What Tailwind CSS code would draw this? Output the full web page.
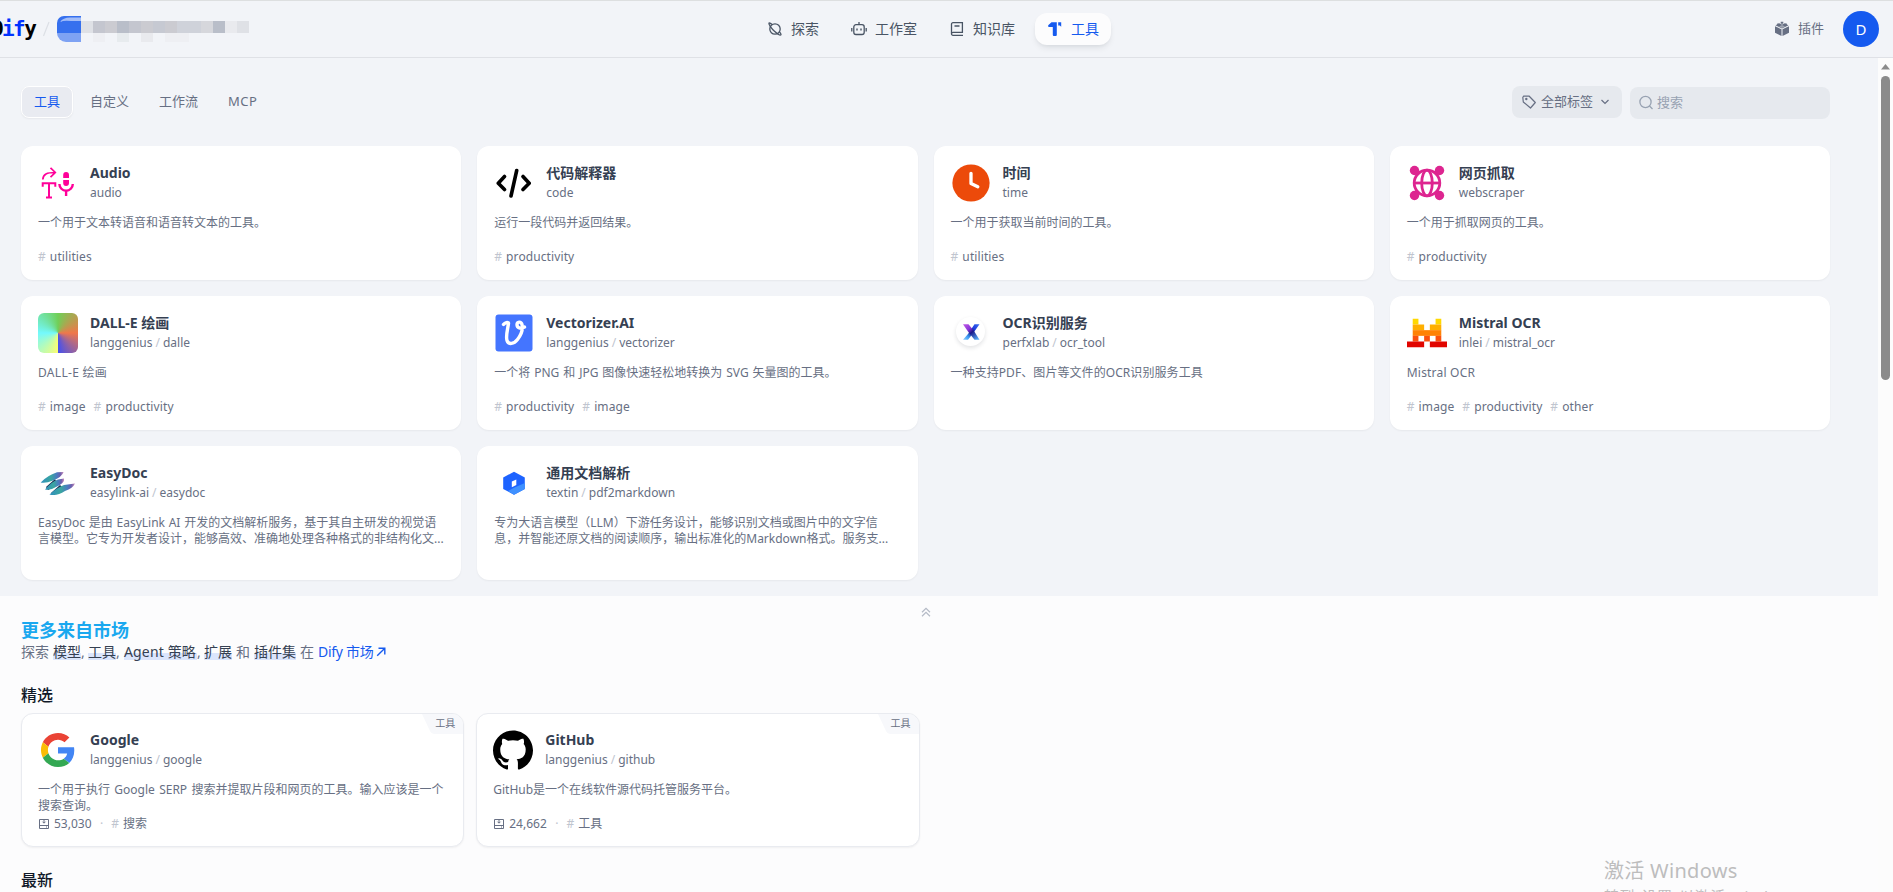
<!DOCTYPE html>
<html lang="zh-CN">
<head>
<meta charset="utf-8">
<title>工具 - Dify</title>
<script src="https://cdn.jsdelivr.net/npm/@tailwindcss/browser@4"></script>
</head>
<body class="w-[1893px] h-[892px] overflow-hidden bg-[#f2f4f8] font-['Noto_Sans','Noto_Sans_CJK_SC',sans-serif] text-[#676f83]">
<div class="flex h-[892px] flex-col relative">

<!-- header -->
<header class="flex h-[58px] shrink-0 items-center border-t border-b border-t-[#dddfe0] border-b-[#dfe1e6]">
  <div class="flex w-[755px] shrink-0 items-center">
    <div class="-ml-[9px] w-[48px] whitespace-nowrap font-['DejaVu_Sans_Mono',monospace] text-[21px] leading-none font-bold tracking-[-1.6px] text-black">D<span class="text-[#0033ff]">if</span>y</div>
    <svg class="ml-[3px] h-4 w-2" viewBox="0 0 8 16" fill="none" stroke="#dcdfe5" stroke-width="1.2"><path d="M7 1 1.5 15"/></svg>
    <svg class="ml-[7px] h-[28px] w-[194px]" viewBox="0 0 194 28" shape-rendering="crispEdges">
      <g shape-rendering="auto"><path d="M7 1h17v17H0V8A7 7 0 0 1 7 1z" fill="#3670ee"/><path d="M0 18h24v9H9a9 9 0 0 1-9-9z" fill="#7ea2f3"/><path d="M3 7Q6 2.500 13 2.500H24V6H14Q7 5 3 7z" fill="#a3bdf8"/></g>
      <path d="M24 6h12v12H24zM180 6h12v12h-12z" fill="#dfe1e6"/>
      <path d="M36 6h12v12H36zM72 6h12v12H72z" fill="#c4c6cf"/>
      <path d="M48 6h12v12H48zM84 6h12v12H84zM108 6h12v12h-12z" fill="#cbcbd1"/>
      <path d="M60 6h12v12H60zM156 6h12v12h-12z" fill="#b9bec9"/>
      <path d="M96 6h12v12H96z" fill="#c6c9d2"/>
      <path d="M120 6h24v12h-24z" fill="#cfd2da"/>
      <path d="M144 6h12v12h-12z" fill="#d6d7dc"/>
      <path d="M168 6h12v12h-12z" fill="#e9eaee"/>
      <path d="M36 18h12v9H36zM108 18h24v9h-24z" fill="#eeeff3"/>
      <path d="M60 18h12v9H60z" fill="#e7ebee"/>
      <path d="M84 18h12v9H84z" fill="#e9eaee"/>
    </svg>
  </div>
  <nav class="flex shrink-0 gap-2 text-sm text-[#495464]">
    <div class="flex h-8 items-center gap-2 px-3">
      <svg class="size-4" viewBox="0 0 16 16" fill="none" stroke="currentColor" stroke-width="1.300"><circle cx="8" cy="8" r="5.200"/><path d="M5 3.600C3.300 2.100 2.200 1.700 1.900 2.100 1.400 3.200 4.500 7.600 7.500 10.300 10.500 13 13.300 14.400 13.900 13.800 14.200 13.400 13.800 12.400 12.500 10.800"/></svg>
      <span>探索</span>
    </div>
    <div class="flex h-8 items-center gap-2 px-3">
      <svg class="size-4" viewBox="0 0 16 16" fill="none" stroke="currentColor" stroke-width="1.300"><rect x="2.800" y="3.700" width="10.400" height="9.800" rx="2.200"/><path d="M8 4V1M.8 7v3.500M15.200 7v3.500"/><path d="M6 7.500v2M10 7.500v2" stroke-width="1.400"/></svg>
      <span>工作室</span>
    </div>
    <div class="flex h-8 items-center gap-2 px-3">
      <svg class="size-4" viewBox="0 0 16 16" fill="none" stroke="currentColor" stroke-width="1.300"><path d="M14 14.300H4a1.500 1.500 0 0 1-1.500-1.600V3.300A1.500 1.500 0 0 1 4 1.700h9.400v9.600H4a1.500 1.500 0 0 0 0 3M5.500 5h5"/></svg>
      <span>知识库</span>
    </div>
    <div class="flex h-8 items-center gap-2 rounded-xl bg-[#fcfcfd] px-3 text-[#155aef] shadow-md shadow-[#101828]/8">
      <svg class="size-4" viewBox="0 0 16 16" fill="currentColor"><path d="M1.200 5.500V4.200L4.500 1.300H9.800V14q0 1-1 1H6.800q-1 0-1-1V6H1.700zM11.200 1.300h3v4.500L12.800 4.500h-1.600z"/></svg>
      <span>工具</span>
    </div>
  </nav>
  <div class="ml-auto flex items-center pr-[14px]">
    <svg class="size-4" viewBox="0 0 16 16" fill="#676f83"><path d="M1 5.200 7.500 8.300V15L1 11.800zM15 5.200 8.500 8.300V15L15 11.800z"/><path d="M8 3.600 11 2.500l3.500 1.700L8 7.400 1.500 4.200 5 2.500z"/><path d="M3.200 2.500h2.600v2H3.200zM10.200 2.500h2.600v2h-2.600zM6.700.8h2.600v2H6.700z"/><path d="M5 5.500 8 4l3 1.500L8 7z" fill="#f2f4f8" opacity=".4"/></svg>
    <span class="ml-2 text-[13px]">插件</span>
    <div class="ml-[19px] flex size-9 items-center justify-center rounded-full bg-[#155aef] text-[15px] text-white">D</div>
  </div>
</header>

<div class="flex min-h-0 grow">
<main class="flex w-[1878px] shrink-0 flex-col overflow-hidden">
  <!-- tabs and filters -->
  <div class="flex items-start justify-between pt-7 pr-12 pl-[21px]">
    <div class="flex gap-1 text-[13px]">
      <div class="flex h-8 items-center rounded-lg border border-white bg-[#e9ebf1] px-3 text-[#155aef] shadow-xs">工具</div>
      <div class="flex h-8 items-center border border-transparent px-3">自定义</div>
      <div class="flex h-8 items-center border border-transparent px-3">工作流</div>
      <div class="flex h-8 items-center border border-transparent px-3 tracking-[0.5px]">MCP</div>
    </div>
    <div class="flex gap-2 text-[13px]">
      <div class="flex h-8 w-[110px] items-center rounded-lg bg-[#e6e9ee] pl-[9px]">
        <svg class="size-4" viewBox="0 0 16 16" fill="none" stroke="currentColor" stroke-width="1.200" stroke-linejoin="round"><path d="M1.800 3.500 2.500 2.200 8 2l6.300 6.500-4.800 5.500L2.300 8z"/><circle cx="5.300" cy="5" r=".6"/></svg>
        <span class="ml-1">全部标签</span>
        <svg class="ml-[7px] size-[10px]" viewBox="0 0 10 10" fill="none" stroke="currentColor" stroke-width="1.200"><path d="m1.500 3 3.500 3.500L8.500 3"/></svg>
      </div>
      <div class="mt-px flex h-8 w-[200px] items-center rounded-lg bg-[#e6e9ee] pl-2 text-[#98a2b2]">
        <svg class="size-4" viewBox="0 0 16 16" fill="none" stroke="currentColor" stroke-width="1.300"><circle cx="7.500" cy="7" r="5.600"/><path d="m11.500 11 3 3"/></svg>
        <span class="ml-[3px]">搜索</span>
      </div>
    </div>
  </div>

  <!-- installed tools -->
  <section class="mt-[27px] grid shrink-0 grid-cols-4 gap-4 pr-12 pb-4 pl-[21px] text-xs">
    <article class="flex h-[134px] flex-col rounded-xl bg-white p-[17px] shadow-xs">
      <div class="flex h-10 shrink-0 gap-3">
        <svg class="size-10 shrink-0" viewBox="0 0 40 40" fill="none" stroke="#ff0099" stroke-width="2"><path d="M4.800 16.500C5 11 9 9.500 17 9.500M12.500 4.800l4.800 4.700-4.800 4.700" stroke-width="1.700"/><path d="M4.700 23.800V20.300H17.300v3.500M11 20v14.500M8 34.500h6" stroke-width="2"/><path d="M25.200 15V12a2.900 2.900 0 0 1 5.800 0v3zM25.200 17h5.800v3a2.900 2.900 0 0 1-5.800 0z" fill="#ff0099" stroke="none"/><path d="M21.400 21a6.700 6.700 0 0 0 13.400 0M28.100 28v5" stroke-width="2.400"/></svg>
        <div><h3 class="text-sm leading-5 font-bold text-[#354052]">Audio</h3><p class="leading-5">audio</p></div>
      </div>
      <p class="mt-3 h-8 shrink-0 leading-4 whitespace-nowrap">一个用于文本转语音和语音转文本的工具。</p>
      <div class="mt-0.5 flex gap-2 leading-4 tracking-[0.1px]"><span class="flex gap-1"><i class="text-[#c0c5cf] not-italic">#</i>utilities</span></div>
    </article>
    <article class="flex h-[134px] flex-col rounded-xl bg-white p-[17px] shadow-xs">
      <div class="flex h-10 shrink-0 gap-3">
        <svg class="size-10 shrink-0" viewBox="0 0 40 40" fill="none" stroke="#000" stroke-width="3.600" stroke-linecap="round" stroke-linejoin="round"><path d="m10.500 13.500-6.200 6.700 6.200 6.300M29 13.500l6.200 6.700L29 26.500M22.700 7.500 17 33"/></svg>
        <div><h3 class="text-sm leading-5 font-bold text-[#354052]">代码解释器</h3><p class="leading-5">code</p></div>
      </div>
      <p class="mt-3 h-8 shrink-0 leading-4 whitespace-nowrap">运行一段代码并返回结果。</p>
      <div class="mt-0.5 flex gap-2 leading-4 tracking-[0.1px]"><span class="flex gap-1"><i class="text-[#c0c5cf] not-italic">#</i>productivity</span></div>
    </article>
    <article class="flex h-[134px] flex-col rounded-xl bg-white p-[17px] shadow-xs">
      <div class="flex h-10 shrink-0 gap-3">
        <svg class="size-10 shrink-0" viewBox="0 0 40 40"><circle cx="20" cy="20" r="18.600" fill="#ec4a0a"/><path d="M20 10.300V20.500l6.800 3.300" fill="none" stroke="#fff" stroke-width="3.300" stroke-linecap="round" stroke-linejoin="round"/></svg>
        <div><h3 class="text-sm leading-5 font-bold text-[#354052]">时间</h3><p class="leading-5">time</p></div>
      </div>
      <p class="mt-3 h-8 shrink-0 leading-4 whitespace-nowrap">一个用于获取当前时间的工具。</p>
      <div class="mt-0.5 flex gap-2 leading-4 tracking-[0.1px]"><span class="flex gap-1"><i class="text-[#c0c5cf] not-italic">#</i>utilities</span></div>
    </article>
    <article class="flex h-[134px] flex-col rounded-xl bg-white p-[17px] shadow-xs">
      <div class="flex h-10 shrink-0 gap-3">
        <svg class="size-10 shrink-0" viewBox="0 0 40 40" fill="none" stroke="#dd2590" stroke-width="2.800"><circle cx="20" cy="20" r="12.800"/><ellipse cx="20" cy="20" rx="5.300" ry="12.800"/><path d="M7 20h26"/><g fill="#dd2590" stroke="none"><circle cx="7.500" cy="7.500" r="4.700"/><circle cx="32.500" cy="7.500" r="4.700"/><circle cx="7.500" cy="32.500" r="4.700"/><circle cx="32.500" cy="32.500" r="4.700"/></g></svg>
        <div><h3 class="text-sm leading-5 font-bold text-[#354052]">网页抓取</h3><p class="leading-5">webscraper</p></div>
      </div>
      <p class="mt-3 h-8 shrink-0 leading-4 whitespace-nowrap">一个用于抓取网页的工具。</p>
      <div class="mt-0.5 flex gap-2 leading-4 tracking-[0.1px]"><span class="flex gap-1"><i class="text-[#c0c5cf] not-italic">#</i>productivity</span></div>
    </article>

    <article class="flex h-[134px] flex-col rounded-xl bg-white p-[17px] shadow-xs">
      <div class="flex h-10 shrink-0 gap-3">
        <div class="size-10 shrink-0 rounded-md bg-[conic-gradient(from_180deg,#fbfd73,#73f9fd_90deg,#70cf57_180deg,#f0774a_270deg,#4450ee)]"></div>
        <div><h3 class="text-sm leading-5 font-bold text-[#354052]">DALL-E 绘画</h3><p class="flex gap-0.5 leading-5">langgenius<i class="text-[#c0c5cf] not-italic px-px">/</i>dalle</p></div>
      </div>
      <p class="mt-3 h-8 shrink-0 leading-4 tracking-[0.3px] whitespace-nowrap">DALL-E 绘画</p>
      <div class="mt-0.5 flex gap-2 leading-4 tracking-[0.1px]"><span class="flex gap-1"><i class="text-[#c0c5cf] not-italic">#</i>image</span><span class="flex gap-1"><i class="text-[#c0c5cf] not-italic">#</i>productivity</span></div>
    </article>
    <article class="flex h-[134px] flex-col rounded-xl bg-white p-[17px] shadow-xs">
      <div class="flex h-10 shrink-0 gap-3">
        <svg class="size-10 shrink-0" viewBox="0 0 40 40"><rect x="1.500" y="1.500" width="37" height="37" rx="3" fill="#4475ff"/><path d="M9.500 11.500C11 9.500 14 9 14.500 10.200 14 15 11.500 23 13 27.500 14.500 32 20 31 23.500 26.500 27 22 29 16 28 11.500 27 8 23 8.500 23 11.800 23 14.800 26.500 16.200 30.500 14" fill="none" stroke="#fff" stroke-width="3.400" stroke-linecap="round"/></svg>
        <div><h3 class="text-sm leading-5 font-bold text-[#354052]">Vectorizer.AI</h3><p class="flex gap-0.5 leading-5">langgenius<i class="text-[#c0c5cf] not-italic px-px">/</i>vectorizer</p></div>
      </div>
      <p class="mt-3 h-8 shrink-0 leading-4 whitespace-nowrap [word-spacing:0.8px]">一个将 PNG 和 JPG 图像快速轻松地转换为 SVG 矢量图的工具。</p>
      <div class="mt-0.5 flex gap-2 leading-4 tracking-[0.1px]"><span class="flex gap-1"><i class="text-[#c0c5cf] not-italic">#</i>productivity</span><span class="flex gap-1"><i class="text-[#c0c5cf] not-italic">#</i>image</span></div>
    </article>
    <article class="flex h-[134px] flex-col rounded-xl bg-white p-[17px] shadow-xs">
      <div class="flex h-10 shrink-0 gap-3">
        <div class="flex size-10 shrink-0 justify-center pt-1">
          <div class="flex size-[29px] items-center justify-center rounded-full bg-white shadow-[0_2px_4px_rgba(16,24,40,0.12)]">
            <svg class="h-4 w-[18px]" viewBox="0 0 18 16"><defs><linearGradient id="xa" x1="0" y1="0" x2=".9" y2="1"><stop offset="0" stop-color="#c45be8"/><stop offset=".35" stop-color="#8a35d8"/><stop offset=".55" stop-color="#1a1a8c"/><stop offset="1" stop-color="#58b4fa"/></linearGradient><linearGradient id="xb" x1="1" y1="0" x2="0" y2="1"><stop offset="0" stop-color="#3b6df0"/><stop offset=".3" stop-color="#1e3fe0"/><stop offset=".5" stop-color="#14147a"/><stop offset=".75" stop-color="#3c9cf5"/><stop offset="1" stop-color="#8fd0fc"/></linearGradient></defs><path d="M17.500.3H12.500L6 10 1 15.700H6L12 8z" fill="url(#xb)"/><path d="M1 .3H6.500L12 7l5.500 8.700H12.500L6 7.500z" fill="url(#xa)"/></svg>
          </div>
        </div>
        <div><h3 class="text-sm leading-5 font-bold text-[#354052]">OCR识别服务</h3><p class="flex gap-0.5 leading-5">perfxlab<i class="text-[#c0c5cf] not-italic px-px">/</i>ocr_tool</p></div>
      </div>
      <p class="mt-3 h-8 shrink-0 leading-4 tracking-[0.07px] whitespace-nowrap">一种支持PDF、图片等文件的OCR识别服务工具</p>
    </article>
    <article class="flex h-[134px] flex-col rounded-xl bg-white p-[17px] shadow-xs">
      <div class="flex h-10 shrink-0 gap-3">
        <svg class="size-10 shrink-0" viewBox="0 0 7 7"><path d="M1 1h1v1H1zM5 1h1v1H5z" fill="#ffd800"/><path d="M1 2h2v1H1zM4 2h2v1H4z" fill="#ffaf00"/><path d="M1 3h5v1H1z" fill="#ff8205"/><path d="M1 4h1v1H1zM3 4h1v1H3zM5 4h1v1H5z" fill="#fa500f"/><path d="M0 5h3v1H0zM4 5h3v1H4z" fill="#e10500"/></svg>
        <div><h3 class="text-sm leading-5 font-bold text-[#354052]">Mistral OCR</h3><p class="flex gap-0.5 leading-5">inlei<i class="text-[#c0c5cf] not-italic px-px">/</i>mistral_ocr</p></div>
      </div>
      <p class="mt-3 h-8 shrink-0 leading-4 tracking-[0.2px] whitespace-nowrap">Mistral OCR</p>
      <div class="mt-0.5 flex gap-2 leading-4 tracking-[0.1px]"><span class="flex gap-1"><i class="text-[#c0c5cf] not-italic">#</i>image</span><span class="flex gap-1"><i class="text-[#c0c5cf] not-italic">#</i>productivity</span><span class="flex gap-1"><i class="text-[#c0c5cf] not-italic">#</i>other</span></div>
    </article>

    <article class="flex h-[134px] flex-col rounded-xl bg-white p-[17px] shadow-xs">
      <div class="flex h-10 shrink-0 gap-3">
        <svg class="size-10 shrink-0" viewBox="0 0 40 40"><defs><linearGradient id="ed"><stop offset="0" stop-color="#2f8fbe"/><stop offset=".45" stop-color="#3aa6a0"/><stop offset=".7" stop-color="#4a7cc0"/><stop offset=".85" stop-color="#6a5fae"/><stop offset="1" stop-color="#c98bb8"/></linearGradient></defs><path d="M17 16 8 24l2 3 10-5zM22 22l-9 8 3 2 10-6z" fill="#14294f"/><path d="M2.700 19.500Q9 12.500 19 9.200L25.600 9Q24 14 15 17.500 8 20.500 2.700 19.500z" fill="url(#ed)"/><path d="M7 26.500Q13 19 20 16.500l6-1Q27 19.500 19 23.500 13 27.500 7 26.500z" fill="url(#ed)"/><path d="M11.500 31.500Q18 25 26 22L37 20.500Q35 25 27 28 19 33.500 11.500 31.500z" fill="url(#ed)"/></svg>
        <div><h3 class="text-sm leading-5 font-bold text-[#354052]">EasyDoc</h3><p class="flex gap-0.5 leading-5">easylink-ai<i class="text-[#c0c5cf] not-italic px-px">/</i>easydoc</p></div>
      </div>
      <p class="mt-3 h-8 shrink-0 leading-4 whitespace-nowrap [word-spacing:0.6px]">EasyDoc 是由 EasyLink AI 开发的文档解析服务，基于其自主研发的视觉语<br>言模型。它专为开发者设计，能够高效、准确地处理各种格式的非结构化文...</p>
    </article>
    <article class="flex h-[134px] flex-col rounded-xl bg-white p-[17px] shadow-xs">
      <div class="flex h-10 shrink-0 gap-3">
        <svg class="size-10 shrink-0" viewBox="0 0 40 40"><path d="M20 8.700 30.800 14.500v11.500L20 31.700 9.200 26V14.500z" fill="#1d63ff"/><path d="M20 24.800 30.800 20v6L20 31.700 14 28z" fill="#3f91ff"/><path d="M17.800 18.500 22.300 16.500v5.500L17.800 24.300z" fill="#fff"/></svg>
        <div><h3 class="text-sm leading-5 font-bold text-[#354052]">通用文档解析</h3><p class="flex gap-0.5 leading-5">textin<i class="text-[#c0c5cf] not-italic px-px">/</i>pdf2markdown</p></div>
      </div>
      <p class="mt-3 h-8 shrink-0 leading-4 whitespace-nowrap">专为大语言模型（LLM）下游任务设计，能够识别文档或图片中的文字信<br>息，并智能还原文档的阅读顺序，输出标准化的Markdown格式。服务支...</p>
    </article>
  </section>

  <!-- marketplace -->
  <section class="flex shrink-0 grow flex-col bg-[#fcfcfd] pr-12 pl-[21px]">
    <div class="flex h-[22px] items-center justify-center pt-[10px]">
      <svg class="size-[10px]" viewBox="0 0 10 10" fill="none" stroke="#b4bac6" stroke-width="1.200"><path d="M1 5.200 5 1.400l4 3.800M1 9.200l4-3.800 4 3.800"/></svg>
    </div>
    <h2 class="h-6 text-lg leading-6 font-semibold text-[#1aa8ef]">更多来自市场</h2>
    <p class="flex h-5 text-sm leading-5 whitespace-nowrap">
      <span class="w-8">探索</span>
      <span class="h-[18px] w-7 bg-linear-to-b from-transparent from-60% to-[#dbe5fc] to-60% text-[#354052]">模型</span><span class="w-[7px]">,</span>
      <span class="h-[18px] w-7 bg-linear-to-b from-transparent from-60% to-[#dbe5fc] to-60% text-[#354052]">工具</span><span class="w-2">,</span>
      <span class="h-[18px] w-[73px] bg-linear-to-b from-transparent from-60% to-[#dbe5fc] to-60% tracking-[0.15px] text-[#354052]">Agent 策略</span><span class="w-[7px]">,</span>
      <span class="h-[18px] w-7 bg-linear-to-b from-transparent from-60% to-[#dbe5fc] to-60% text-[#354052]">扩展</span>
      <span class="w-[22px] pl-1">和</span>
      <span class="h-[18px] w-[42px] bg-linear-to-b from-transparent from-60% to-[#dbe5fc] to-60% text-[#354052]">插件集</span>
      <span class="w-[22px] pl-1">在</span>
      <span class="w-[55px] tracking-[-0.3px] text-[#155aef]">Dify 市场</span>
      <svg class="mt-1 ml-[2px] size-3" viewBox="0 0 12 12" fill="none" stroke="#155aef" stroke-width="1.400"><path d="M3.500 2.200h6.300v6.300M9.800 2.200 2.200 9.800"/></svg>
    </p>
    <h4 class="mt-[21px] h-6 text-base leading-6 font-medium text-[#101828]">精选</h4>
    <div class="mt-1.5 grid grid-cols-4 gap-3 text-xs">
      <article class="relative flex h-[134px] flex-col overflow-hidden rounded-xl border border-[#e9ebf0] bg-white p-4 shadow-xs">
        <div class="absolute top-0 right-0 flex h-5">
          <svg class="h-5 w-[13px]" viewBox="0 0 13 20"><path d="M0 0h13v20q-4 0-5.500-4z" fill="#f7f8fb"/></svg>
          <div class="h-5 w-7 bg-[#f7f8fb] text-[10px] leading-[18px]">工具</div>
        </div>
        <div class="flex h-10 shrink-0 gap-3">
          <svg class="size-10 shrink-0 p-[3px]" viewBox="0 0 48 48"><path fill="#EA4335" d="M24 9.500c3.540 0 6.710 1.220 9.210 3.600l6.850-6.850C35.900 2.380 30.470 0 24 0 14.620 0 6.510 5.380 2.560 13.220l7.980 6.190C12.430 13.720 17.740 9.500 24 9.500z"/><path fill="#4285F4" d="M46.980 24.550c0-1.570-.15-3.090-.38-4.550H24v9.020h12.940c-.58 2.960-2.260 5.480-4.780 7.180l7.730 6c4.510-4.180 7.090-10.360 7.090-17.650z"/><path fill="#FBBC05" d="M10.530 28.590c-.48-1.450-.76-2.990-.76-4.590s.27-3.140.76-4.590l-7.980-6.190C.92 16.460 0 20.120 0 24c0 3.880.92 7.540 2.560 10.780l7.970-6.190z"/><path fill="#34A853" d="M24 48c6.480 0 11.930-2.130 15.890-5.810l-7.730-6c-2.150 1.450-4.920 2.300-8.160 2.300-6.260 0-11.570-4.220-13.470-9.910l-7.980 6.190C6.510 42.620 14.620 48 24 48z"/></svg>
          <div><h3 class="text-sm leading-5 font-bold text-[#354052]">Google</h3><p class="flex gap-0.5 leading-5">langgenius<i class="text-[#c0c5cf] not-italic px-px">/</i>google</p></div>
        </div>
        <p class="mt-3 h-8 shrink-0 leading-4 whitespace-nowrap [word-spacing:1.2px]">一个用于执行 Google SERP 搜索并提取片段和网页的工具。输入应该是一个<br>搜索查询。</p>
        <div class="mt-0.5 flex items-center leading-4">
          <svg class="size-3" viewBox="0 0 12 12" fill="none" stroke="currentColor"><path d="M1.500 1.500h9v9h-9zM1.500 7.500h9M6 2v3M4.500 3.700 6 5.200l1.500-1.500M8 9h1"/></svg>
          <span class="ml-1 w-[38px]">53,030</span><span class="mx-2 text-[#c0c5cf]">·</span><span class="flex gap-1"><i class="text-[#c0c5cf] not-italic">#</i>搜索</span>
        </div>
      </article>
      <article class="relative flex h-[134px] flex-col overflow-hidden rounded-xl border border-[#e9ebf0] bg-white p-4 shadow-xs">
        <div class="absolute top-0 right-0 flex h-5">
          <svg class="h-5 w-[13px]" viewBox="0 0 13 20"><path d="M0 0h13v20q-4 0-5.500-4z" fill="#f7f8fb"/></svg>
          <div class="h-5 w-7 bg-[#f7f8fb] text-[10px] leading-[18px]">工具</div>
        </div>
        <div class="flex h-10 shrink-0 gap-3">
          <svg class="size-10 shrink-0" viewBox="0 0 24 24" fill="#000"><path d="M12 .297c-6.630 0-12 5.373-12 12 0 5.303 3.438 9.800 8.205 11.385.6.113.82-.258.82-.577 0-.285-.01-1.040-.015-2.040-3.338.724-4.042-1.610-4.042-1.610C4.422 18.070 3.633 17.700 3.633 17.700c-1.087-.744.084-.729.084-.729 1.205.084 1.838 1.236 1.838 1.236 1.070 1.835 2.809 1.305 3.495.998.108-.776.417-1.305.76-1.605-2.665-.3-5.466-1.332-5.466-5.930 0-1.310.465-2.380 1.235-3.220-.135-.303-.54-1.523.105-3.176 0 0 1.005-.322 3.300 1.230.96-.267 1.980-.399 3-.405 1.020.006 2.040.138 3 .405 2.280-1.552 3.285-1.230 3.285-1.230.645 1.653.24 2.873.12 3.176.765.840 1.230 1.910 1.230 3.220 0 4.610-2.805 5.625-5.475 5.920.42.360.81 1.096.81 2.220 0 1.606-.015 2.896-.015 3.286 0 .315.21.690.825.570C20.565 22.092 24 17.592 24 12.297c0-6.627-5.373-12-12-12"/></svg>
          <div><h3 class="text-sm leading-5 font-bold text-[#354052]">GitHub</h3><p class="flex gap-0.5 leading-5">langgenius<i class="text-[#c0c5cf] not-italic px-px">/</i>github</p></div>
        </div>
        <p class="mt-3 h-8 shrink-0 leading-4 whitespace-nowrap">GitHub是一个在线软件源代码托管服务平台。</p>
        <div class="mt-0.5 flex items-center leading-4">
          <svg class="size-3" viewBox="0 0 12 12" fill="none" stroke="currentColor"><path d="M1.500 1.500h9v9h-9zM1.500 7.500h9M6 2v3M4.500 3.700 6 5.200l1.500-1.500M8 9h1"/></svg>
          <span class="ml-1 w-[38px]">24,662</span><span class="mx-2 text-[#c0c5cf]">·</span><span class="flex gap-1"><i class="text-[#c0c5cf] not-italic">#</i>工具</span>
        </div>
      </article>
    </div>
    <h4 class="mt-[21px] h-6 text-base leading-6 font-medium text-[#101828]">最新</h4>
  </section>
</main>

<!-- scrollbar -->
<aside class="flex w-[15px] flex-col items-center bg-[#fcfcfc] pt-[6px]">
  <svg class="h-[6px] w-[9px]" viewBox="0 0 9 6" fill="#8b8b8b"><path d="M4.500 0 9 5.500H0z"/></svg>
  <div class="mt-[6px] h-[304px] w-[9px] rounded-full bg-[#8b8b8b]"></div>
</aside>
</div>

<!-- desktop watermark -->
<div class="absolute top-[856px] left-[1604px] h-9 overflow-hidden whitespace-nowrap text-[#bdbdbd]">
  <div class="text-xl leading-[30px] tracking-[0.3px]">激活 Windows</div>
  <div class="text-[15px] leading-5 tracking-[0.5px]">转到"设置"以激活 Windows。</div>
</div>
</div>
</body>
</html>
